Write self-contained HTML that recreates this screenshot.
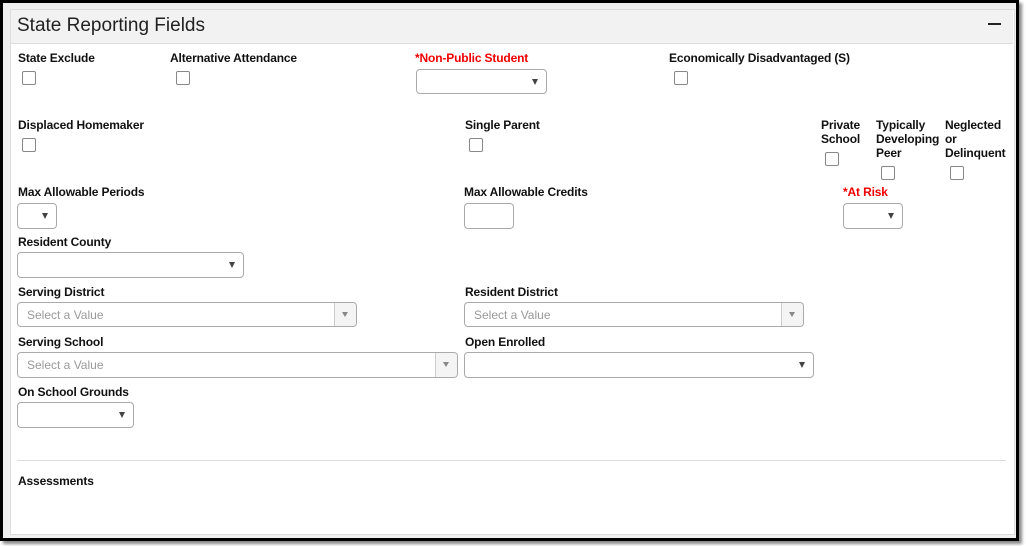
<!DOCTYPE html>
<html><head><style>
body{margin:0;width:1026px;height:546px;background:#fff;position:relative;overflow:hidden;font-family:"Liberation Sans",Arial,sans-serif}
.frame{position:absolute;left:0;top:0;width:1013px;height:535px;border:3px solid #000;box-shadow:3px 3px 3px #888;background:#f0f0f0}
.panel{position:absolute;left:10px;top:9px;width:1003px;height:524px;background:#fff;border:1px solid #ddd}
.hdr{position:absolute;left:11px;top:10px;width:1002px;height:33px;background:#f2f2f2;border-bottom:1px solid #ddd}
.ttl{position:absolute;left:17px;top:15px;font-size:19px;color:#222}
.min{position:absolute;left:988px;top:23px;width:13px;height:2px;background:#222}
.l{position:absolute;font-size:12px;font-weight:bold;color:#111;line-height:14px;letter-spacing:-0.15px}
.r{color:#e00}
.cb{position:absolute;width:12px;height:12px;border:1px solid #888;border-radius:2px;background:#fff}
.sel{position:absolute;height:24px;border:1px solid #aaa;border-radius:4px;background:#fff;box-sizing:border-box}
.sel:after{content:"";position:absolute;right:8px;top:9px;border-left:3px solid transparent;border-right:3px solid transparent;border-top:6px solid #444}
.ph{position:absolute;height:25px;border:1px solid #aaa;border-radius:4px;background:#fff;box-sizing:border-box;font-size:12px;color:#999;padding:5px 9px}
.ph b{position:absolute;right:0;top:0;width:21px;height:23px;border-left:1px solid #ccc;background:#f4f4f4;border-radius:0 4px 4px 0}
.ph b:after{content:"";position:absolute;left:7px;top:9px;border-left:3px solid transparent;border-right:3px solid transparent;border-top:5px solid #888}
.hr{position:absolute;left:17px;top:460px;width:989px;height:1px;background:#ddd}
</style></head><body>
<div class="frame"></div>
<div class="panel"></div>
<div class="hdr"></div>
<div class="ttl">State Reporting Fields</div>
<div class="min"></div>

<div class="l" style="left:18px;top:51px">State Exclude</div>
<div class="cb" style="left:22px;top:71px"></div>
<div class="l" style="left:170px;top:51px">Alternative Attendance</div>
<div class="cb" style="left:176px;top:71px"></div>
<div class="l r" style="left:415px;top:51px">*Non-Public Student</div>
<div class="sel" style="left:416px;top:69px;width:131px;height:25px"></div>
<div class="l" style="left:669px;top:51px">Economically Disadvantaged (S)</div>
<div class="cb" style="left:674px;top:71px"></div>

<div class="l" style="left:18px;top:118px">Displaced Homemaker</div>
<div class="cb" style="left:22px;top:138px"></div>
<div class="l" style="left:465px;top:118px">Single Parent</div>
<div class="cb" style="left:469px;top:138px"></div>
<div class="l" style="left:821px;top:118px">Private<br>School</div>
<div class="cb" style="left:825px;top:152px"></div>
<div class="l" style="left:876px;top:118px">Typically<br>Developing<br>Peer</div>
<div class="cb" style="left:881px;top:166px"></div>
<div class="l" style="left:945px;top:118px">Neglected<br>or<br>Delinquent</div>
<div class="cb" style="left:950px;top:166px"></div>

<div class="l" style="left:18px;top:185px">Max Allowable Periods</div>
<div class="sel" style="left:17px;top:203px;width:40px;height:26px"></div>
<div class="l" style="left:464px;top:185px">Max Allowable Credits</div>
<div style="position:absolute;left:464px;top:203px;width:50px;height:26px;border:1px solid #aaa;border-radius:4px;box-sizing:border-box"></div>
<div class="l r" style="left:843px;top:185px">*At Risk</div>
<div class="sel" style="left:843px;top:203px;width:60px;height:26px"></div>

<div class="l" style="left:18px;top:235px">Resident County</div>
<div class="sel" style="left:17px;top:252px;width:227px;height:26px"></div>

<div class="l" style="left:18px;top:285px">Serving District</div>
<div class="ph" style="left:17px;top:302px;width:340px">Select a Value<b></b></div>
<div class="l" style="left:465px;top:285px">Resident District</div>
<div class="ph" style="left:464px;top:302px;width:340px">Select a Value<b></b></div>

<div class="l" style="left:18px;top:335px">Serving School</div>
<div class="ph" style="left:17px;top:352px;width:441px;height:26px">Select a Value<b style="height:24px"></b></div>
<div class="l" style="left:465px;top:335px">Open Enrolled</div>
<div class="sel" style="left:464px;top:352px;width:350px;height:26px"></div>

<div class="l" style="left:18px;top:385px">On School Grounds</div>
<div class="sel" style="left:17px;top:402px;width:117px;height:26px"></div>

<div class="hr"></div>
<div class="l" style="left:18px;top:474px">Assessments</div>
</body></html>
